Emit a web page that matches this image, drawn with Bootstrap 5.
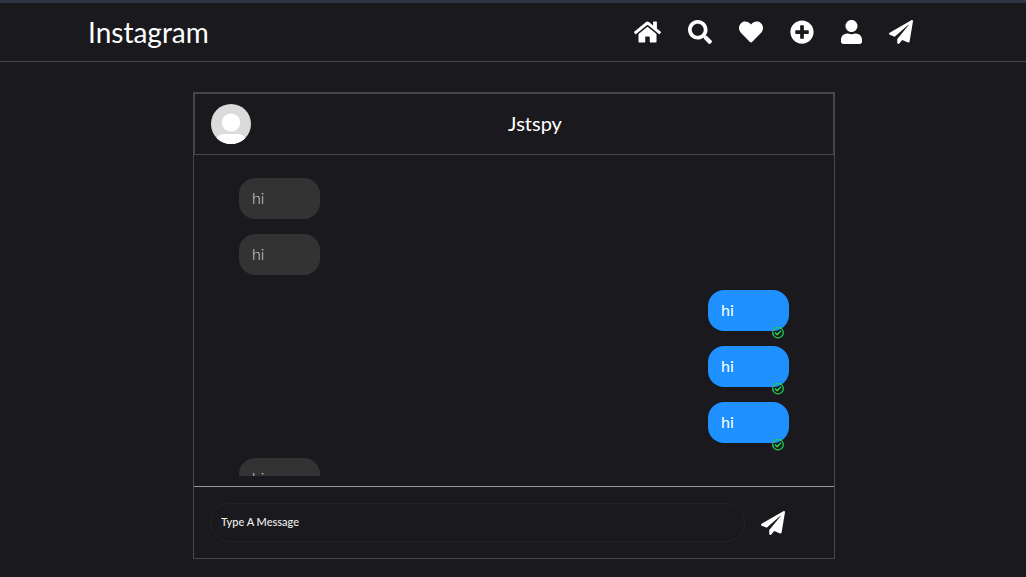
<!DOCTYPE html>
<html lang="en">
<head>
<meta charset="utf-8">
<meta name="viewport" content="width=device-width, initial-scale=1">
<title>Instagram</title>
<link href="https://cdn.jsdelivr.net/npm/bootstrap@5.3.0/dist/css/bootstrap.min.css" rel="stylesheet">
<style>
  body { background: #1a191d; color: #fff; font-family: Lato, "Open Sans", sans-serif; border-top: 3px solid #303545; }
  svg { display: block; fill: currentColor; }
  .icon { height: 24px; width: auto; }
  .topbar { --bs-navbar-padding-y: 0; height: 59px; border-bottom: 1px solid #48484b; padding-left: 88px; padding-right: 113px; }
  .topbar .navbar-brand { font-size: 28px; line-height: 36px; padding: 0; color: #fff; }
  .topbar .navbar-nav { gap: 27px; }
  .page { padding: 30px 191px 18px 193px; }
  .chat { border: 1px solid #48484b; }
  .chat-head { height: 62px; border: 1px solid #48484b; padding: 0 16px; }
  .avatar { width: 40px; height: 40px; }
  .chat-name { font-size: 20px; line-height: 28px; padding: 0 14px 2px 16px; }
  .messages { height: 321px; padding: 23px 45px 0; gap: 15px; overflow: hidden; }
  .bubble { width: 81px; height: 41px; flex-shrink: 0; padding: 0 13px; border-radius: 16px; font-size: 16px; line-height: 40px; font-weight: 300; }
  .bubble-in { background: #333; color: #ddd; }
  .bubble-out { background: #1e90ff; color: #fff; font-weight: 400; }
  .seen { position: absolute; right: 5px; bottom: -8px; width: 12px; height: 12px; color: #1fcc55; }
  .composer { margin-top: 10px; height: 72px; border-top: 1px solid #98989a; padding: 0 49px 0 16px; gap: 16px; }
  .composer .form-control { height: 39px; border: 1px solid #232427; border-radius: 20px; background: transparent; color: #ddd; font-size: 11px; font-weight: 500; padding: 0 10px 2px; }
  .composer .form-control::placeholder { color: #eee; opacity: 1; }
  @media (max-width: 800px) {
    .topbar { padding-left: 16px; padding-right: 16px; }
    .topbar .navbar-nav { gap: 12px; }
    .page { padding-left: 12px; padding-right: 12px; }
  }
</style>
</head>
<body>
<svg class="d-none" aria-hidden="true">
  <symbol id="plane" viewBox="0 0 512 512"><path d="M476 3.2L12.5 270.6c-18.1 10.4-15.8 35.6 2.2 43.2L121 358.4l287.3-253.2c5.5-4.9 13.3 2.6 8.6 8.3L176 407v80.5c0 23.6 28.5 32.9 42.5 15.8L282 426l124.6 52.2c14.2 6 30.4-2.9 33-18.2l72-432C515 7.8 493.3-6.8 476 3.2z"/></symbol>
  <symbol id="check" viewBox="0 0 12 12"><circle cx="6" cy="5.6" r="5.3" fill="none" stroke="currentColor" stroke-width="1.3"/><path d="M3 5.6L5.2 7.7L9 3.8" fill="none" stroke="currentColor" stroke-width="1.6"/></symbol>
</svg>

<nav class="navbar navbar-expand topbar">
  <a class="navbar-brand m-0" href="#">Instagram</a>
  <div class="navbar-nav ms-auto align-items-center">
    <a class="text-white" href="#" aria-label="Home"><svg class="icon" width="27" height="24" viewBox="0 0 576 512"><path d="M280.37 148.26L96 300.11V464a16 16 0 0 0 16 16l112.06-.29a16 16 0 0 0 15.92-16V368a16 16 0 0 1 16-16h64a16 16 0 0 1 16 16v95.64a16 16 0 0 0 16 16.05L464 480a16 16 0 0 0 16-16V300L295.67 148.26a12.19 12.19 0 0 0-15.3 0zM571.6 251.47L488 182.56V44.05a12 12 0 0 0-12-12h-56a12 12 0 0 0-12 12v72.61L318.47 43a48 48 0 0 0-61 0L4.34 251.47a12 12 0 0 0-1.6 16.9l25.5 31A12 12 0 0 0 45.15 301l235.22-193.74a12.19 12.19 0 0 1 15.3 0L530.9 301a12 12 0 0 0 16.9-1.6l25.5-31a12 12 0 0 0-1.7-16.93z"/></svg></a>
    <a class="text-white" href="#" aria-label="Search"><svg class="icon" width="24" height="24" viewBox="0 0 512 512"><path d="M505 442.7L405.3 343c-4.5-4.5-10.6-7-17-7H372c27.6-35.3 44-79.7 44-128C416 93.1 322.9 0 208 0S0 93.1 0 208s93.1 208 208 208c48.3 0 92.7-16.4 128-44v16.3c0 6.4 2.5 12.5 7 17l99.7 99.7c9.4 9.4 24.6 9.4 33.9 0l28.3-28.3c9.4-9.4 9.4-24.6.1-34zM208 336c-70.7 0-128-57.2-128-128 0-70.7 57.2-128 128-128 70.7 0 128 57.2 128 128 0 70.7-57.2 128-128 128z"/></svg></a>
    <a class="text-white" href="#" aria-label="Likes"><svg class="icon" width="24" height="24" viewBox="0 0 512 512"><path d="M462.3 62.6C407.5 15.9 326 24.3 275.7 76.2L256 96.5l-19.7-20.3C186.1 24.3 104.5 15.9 49.7 62.6c-62.8 53.6-66.1 149.8-9.9 207.9l193.5 199.8c12.5 12.9 32.8 12.9 45.3 0l193.5-199.8c56.3-58.1 53-154.3-9.8-207.9z"/></svg></a>
    <a class="text-white" href="#" aria-label="New post"><svg class="icon" width="24" height="24" viewBox="0 0 512 512"><path d="M256 8C119 8 8 119 8 256s111 248 248 248 248-111 248-248S393 8 256 8zm144 276c0 6.6-5.4 12-12 12h-92v92c0 6.6-5.4 12-12 12h-56c-6.6 0-12-5.4-12-12v-92h-92c-6.6 0-12-5.4-12-12v-56c0-6.6 5.4-12 12-12h92v-92c0-6.6 5.4-12 12-12h56c6.6 0 12 5.4 12 12v92h92c6.6 0 12 5.4 12 12v56z"/></svg></a>
    <a class="text-white" href="#" aria-label="Profile"><svg class="icon" width="21" height="24" viewBox="0 0 448 512"><path d="M224 256c70.7 0 128-57.3 128-128S294.7 0 224 0 96 57.3 96 128s57.3 128 128 128zm89.6 32h-16.7c-22.2 10.2-46.9 16-72.9 16s-50.6-5.8-72.9-16h-16.7C60.2 288 0 348.2 0 422.4V464c0 26.5 21.5 48 48 48h352c26.5 0 48-21.5 48-48v-41.6c0-74.2-60.2-134.4-134.4-134.4z"/></svg></a>
    <a class="text-white" href="#" aria-label="Messages"><svg class="icon" width="24" height="24" viewBox="0 0 512 512"><use href="#plane"/></svg></a>
  </div>
</nav>

<main class="page">
  <section class="chat">
    <header class="chat-head d-flex align-items-center">
      <svg class="avatar flex-shrink-0" viewBox="0 0 40 40" role="img" aria-label="Profile picture">
        <defs><clipPath id="round"><circle cx="20" cy="20" r="20"/></clipPath></defs>
        <g clip-path="url(#round)"><rect width="40" height="40" fill="#dbdbdb"/><circle cx="20" cy="18.6" r="9.2" fill="#fff"/><path d="M6 40V34Q8 30 13 30H27Q32 30 34 34V40Z" fill="#fff"/></g>
      </svg>
      <h1 class="chat-name flex-grow-1 text-center fw-normal m-0">Jstspy</h1>
    </header>
    <div class="messages d-flex flex-column">
      <div class="bubble bubble-in">hi</div>
      <div class="bubble bubble-in">hi</div>
      <div class="bubble bubble-out align-self-end position-relative">hi<svg class="seen" viewBox="0 0 12 12"><use href="#check"/></svg></div>
      <div class="bubble bubble-out align-self-end position-relative">hi<svg class="seen" viewBox="0 0 12 12"><use href="#check"/></svg></div>
      <div class="bubble bubble-out align-self-end position-relative">hi<svg class="seen" viewBox="0 0 12 12"><use href="#check"/></svg></div>
      <div class="bubble bubble-in">hi</div>
    </div>
    <form class="composer d-flex align-items-center">
      <input class="form-control" type="text" placeholder="Type A Message" aria-label="Type A Message">
      <button class="btn p-0 border-0 text-white" type="button" aria-label="Send"><svg class="icon" width="24" height="24" viewBox="0 0 512 512"><use href="#plane"/></svg></button>
    </form>
  </section>
</main>
<script src="https://cdn.jsdelivr.net/npm/bootstrap@5.3.0/dist/js/bootstrap.bundle.min.js"></script>
</body>
</html>
